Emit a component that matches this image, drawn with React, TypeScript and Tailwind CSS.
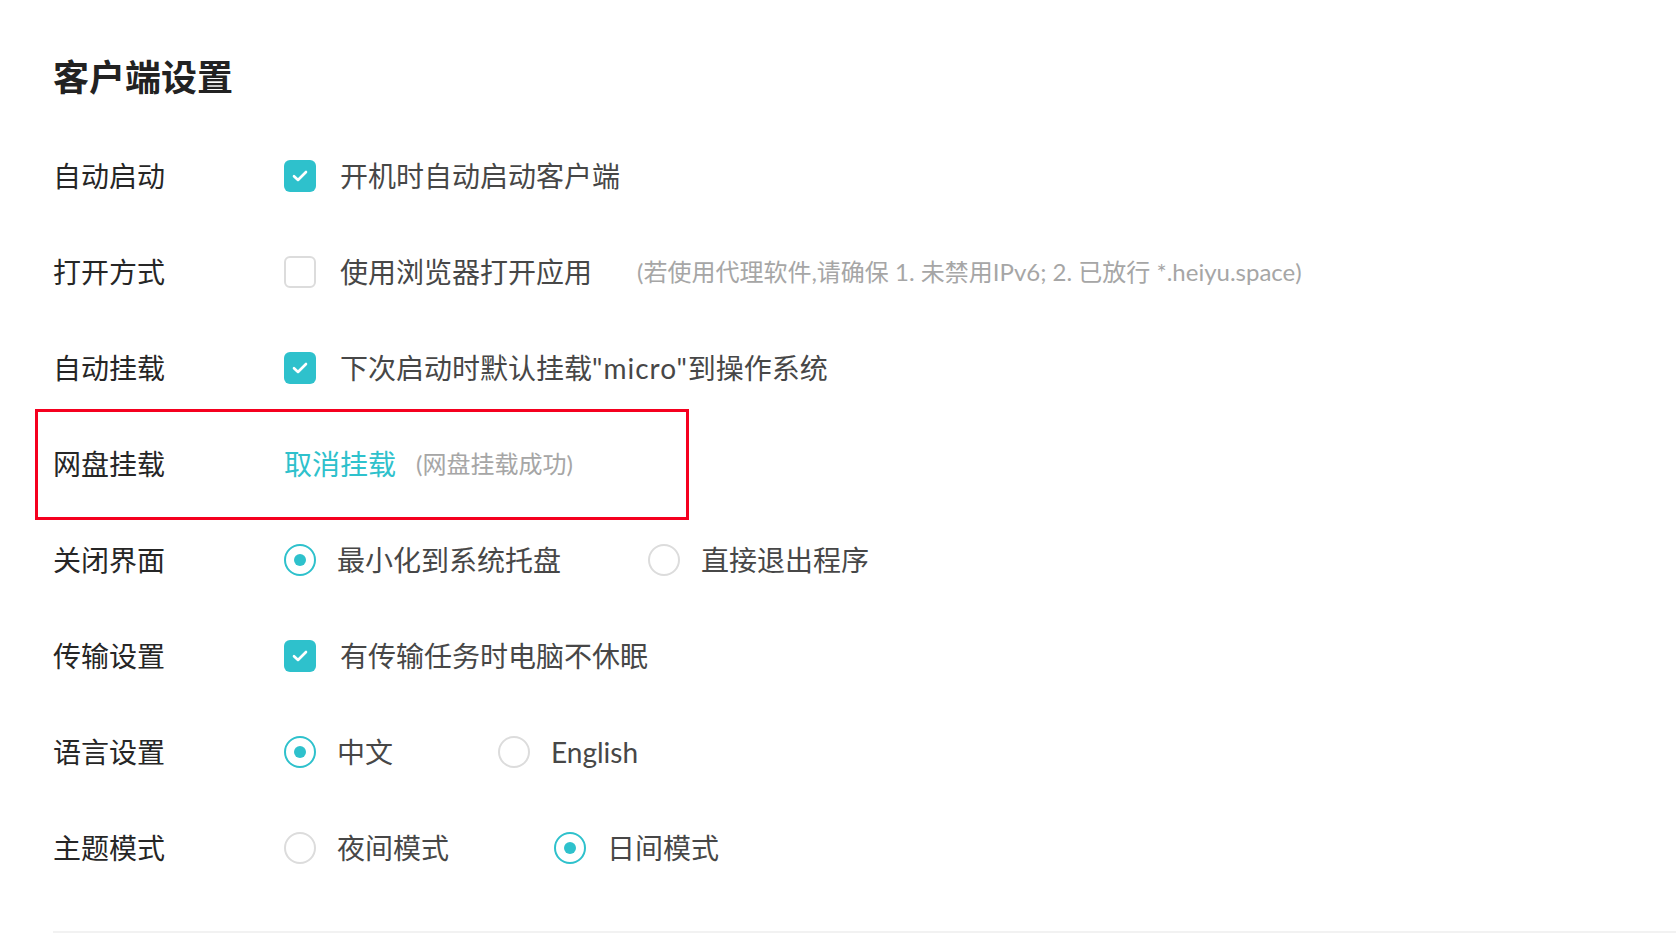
import React from "react";

const teal = "#2ec1cc";

const Checkbox = ({ checked }: { checked?: boolean }) =>
  checked ? (
    <span className="flex h-[32px] w-[32px] shrink-0 items-center justify-center rounded-[6px] bg-[#2ec1cc]">
      <svg width="16" height="12" viewBox="0 0 16 12" fill="none">
        <path d="M2 6.2l4 3.8 8-8" stroke="#fff" strokeWidth="2.6" strokeLinecap="round" strokeLinejoin="round" />
      </svg>
    </span>
  ) : (
    <span className="h-[32px] w-[32px] shrink-0 rounded-[6px] border-2 border-[#dcdcdc] bg-white" />
  );

const Radio = ({ checked }: { checked?: boolean }) => (
  <span
    className={
      checked
        ? "flex h-[32px] w-[32px] shrink-0 items-center justify-center rounded-full border-2 border-[#2ec1cc]"
        : "h-[32px] w-[32px] shrink-0 rounded-full border-2 border-[#dcdcdc]"
    }>
    {checked && <span className="h-[12px] w-[12px] rounded-full bg-[#2ec1cc]" />}
  </span>
);

const Row = ({ label, children }: { label: string; children: React.ReactNode }) => (
  <div className="relative flex h-[96px] items-center">
    <div className="w-[231px] shrink-0 text-[28px] text-[#262626]">{label}</div>
    {children}
  </div>
);

const CheckOption = ({ checked, text }: { checked?: boolean; text: React.ReactNode }) => (
  <div className="flex items-center gap-[24px]">
    <Checkbox checked={checked} />
    <span className="text-[28px] text-[#474747]">{text}</span>
  </div>
);

const RadioOption = ({ checked, text }: { checked?: boolean; text: string }) => (
  <div className="flex items-center gap-[21px]">
    <Radio checked={checked} />
    <span className="text-[28px] text-[#474747]">{text}</span>
  </div>
);

export default function App() {
  return (
    <div
      className="min-h-screen w-full overflow-hidden bg-white pl-[53px] pt-[53px] leading-none"
      style={{ fontFamily: 'Lato, "Noto Sans CJK SC", sans-serif' }}>
      <h1 className="flex h-[48px] items-center text-[36px] font-bold text-[#222]">客户端设置</h1>
      <div className="mt-[27px]">
        <Row label="自动启动">
          <CheckOption checked text="开机时自动启动客户端" />
        </Row>
        <Row label="打开方式">
          <CheckOption text="使用浏览器打开应用" />
          <span className="ml-[45px] text-[24px] text-[#a6a6a6]">
            (若使用代理软件,请确保 1. 未禁用IPv6; 2. 已放行 *.heiyu.space)
          </span>
        </Row>
        <Row label="自动挂载">
          <CheckOption
            checked
            text={
              <>
                下次启动时默认挂载<span className="tracking-[1px]">"micro"</span>到操作系统
              </>
            }
          />
        </Row>
        <Row label="网盘挂载">
          <div className="pointer-events-none absolute -left-[18px] top-[-7px] h-[111px] w-[654px] border-[3px] border-[#f5001f]" />
          <span className="text-[28px]" style={{ color: teal }}>
            取消挂载
          </span>
          <span className="ml-[20px] text-[24px] text-[#a6a6a6]">(网盘挂载成功)</span>
        </Row>
        <Row label="关闭界面">
          <div className="flex items-center gap-[87px]">
            <RadioOption checked text="最小化到系统托盘" />
            <RadioOption text="直接退出程序" />
          </div>
        </Row>
        <Row label="传输设置">
          <CheckOption checked text="有传输任务时电脑不休眠" />
        </Row>
        <Row label="语言设置">
          <div className="flex items-center gap-[105px]">
            <RadioOption checked text="中文" />
            <RadioOption text="English" />
          </div>
        </Row>
        <Row label="主题模式">
          <div className="flex items-center gap-[105px]">
            <RadioOption text="夜间模式" />
            <RadioOption checked text="日间模式" />
          </div>
        </Row>
      </div>
      <div className="mt-[35px] h-[2px] bg-[#f2f2f2]" />
    </div>
  );
}
